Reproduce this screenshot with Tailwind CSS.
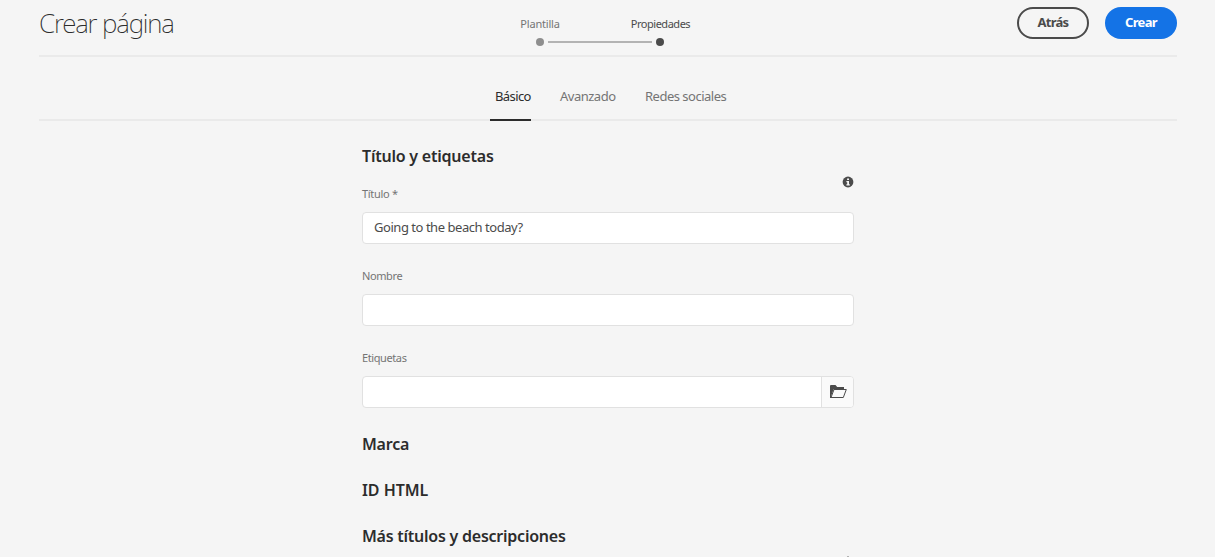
<!DOCTYPE html>
<html lang="es">
<head>
<meta charset="utf-8">
<title>Crear página</title>
<script src="https://cdn.jsdelivr.net/npm/@tailwindcss/browser@4"></script>
</head>
<body class="h-[557px] overflow-hidden bg-[#f5f5f5] font-['Noto_Sans','Open_Sans',sans-serif] text-[#4b4b4b]">
<header class="mx-[39px] mr-[38px] grid h-[57px] grid-cols-3 border-b-2 border-[#eaeaea]">
  <h1 class="pt-[3px] text-[26px] leading-[40px] font-[250] tracking-[-1.15px] whitespace-nowrap text-[#2c2c2c]"><span>Crear página</span></h1>
  <div class="flex justify-center pt-[16px] pr-[15px] text-[11px] leading-4">
    <div class="flex w-[180px] flex-col">
      <div class="flex justify-between">
        <div class="w-[59px] text-center tracking-[-0.2px] text-[#747474]"><span>Plantilla</span></div>
        <div class="w-[60px] text-center tracking-[-0.48px] whitespace-nowrap"><span>Propiedades</span></div>
      </div>
      <div class="mt-[6px] flex items-center gap-1 px-[26px]">
        <span class="size-2 rounded-full bg-[#8e8e8e]"></span>
        <span class="h-0.5 flex-1 bg-[#b3b3b3]"></span>
        <span class="size-2 rounded-full bg-[#4b4b4b]"></span>
      </div>
    </div>
  </div>
  <div class="flex justify-end gap-4 pt-[7px] text-[13px] font-bold">
    <button class="h-8 w-[72px] rounded-full border-2 border-[#4b4b4b] tracking-[-0.75px]"><span>Atrás</span></button>
    <button class="h-8 w-[72px] rounded-full bg-[#1473e6] tracking-[-0.7px] text-white"><span>Crear</span></button>
  </div>
</header>
<nav class="mx-[39px] mr-[38px] flex h-16 border-b-2 border-[#eaeaea] pl-[451px] text-[13px] leading-5 whitespace-nowrap text-[#747474]">
  <a class="-mb-0.5 h-16 w-[41px] border-b-2 border-[#2c2c2c] pt-[29px] pl-[5px] tracking-[-0.6px] text-[#2c2c2c]"><span>Básico</span></a>
  <a class="ml-[29px] w-[85px] pt-[29px] tracking-[-0.5px]"><span>Avanzado</span></a>
  <a class="pt-[29px] tracking-[-0.5px]"><span>Redes sociales</span></a>
</nav>
<main class="ml-[362px] w-[492px] whitespace-nowrap">
  <h2 class="pt-[23px] text-[16px] leading-6 font-semibold tracking-[-0.22px] text-[#2c2c2c]"><span>Título y etiquetas</span></h2>
  <div class="mt-2 flex h-9 justify-between text-[11px] leading-4 text-[#747474]">
    <label class="pt-[10px] tracking-[-0.3px]"><span>Título *</span></label>
    <svg class="h-3 w-3" viewBox="0 0 12 12"><circle cx="6" cy="6" r="5.4" fill="#4b4b4b"/><path d="M5.1 2.4H7v1.7H5.1zM4.4 5H7v3.2h.8v1.2H4.4V8.2h.8v-2h-.8z" fill="#f5f5f5"/></svg>
  </div>
  <div class="flex h-8 items-center rounded-[4px] border border-[#e1e1e1] bg-white pl-[11px] text-[13px] tracking-[-0.46px]"><span>Going to the beach today?</span></div>
  <div class="pt-[24px] pb-[10px] text-[11px] leading-4 tracking-[-0.4px] text-[#747474]"><span>Nombre</span></div>
  <div class="h-8 rounded-[4px] border border-[#e1e1e1] bg-white"></div>
  <div class="pt-[24px] pb-[10px] text-[11px] leading-4 tracking-[-0.4px] text-[#747474]"><span>Etiquetas</span></div>
  <div class="flex h-8 overflow-hidden rounded-[4px] border border-[#e1e1e1] bg-white">
    <div class="flex-1"></div>
    <div class="w-8 border-l border-[#e1e1e1] bg-[#fafafa] pt-[8px] pl-[8px]">
      <svg class="h-[14px] w-[17px]" viewBox="0 0 17 14"><path d="M0 13V1Q0 0 1 0h4.5L7.2 2H14v2.5H3.5L1.2 11V13z" fill="#4b4b4b"/><path d="M4 4.5h12.3L13.3 12.5H1z" fill="#fafafa" stroke="#4b4b4b"/></svg>
    </div>
  </div>
  <div class="flex flex-col gap-[22px] pt-6 text-[16px] leading-6 font-semibold tracking-[-0.24px] text-[#2c2c2c]">
    <h2><span>Marca</span></h2>
    <h2 class="tracking-[-0.05px]"><span>ID HTML</span></h2>
    <h2><span>Más títulos y descripciones</span></h2>
  </div>
  <div class="mt-2 mr-[5px] ml-auto h-px w-[2px] bg-[#b3b3b3]"></div>
</main>
</body>
</html>
